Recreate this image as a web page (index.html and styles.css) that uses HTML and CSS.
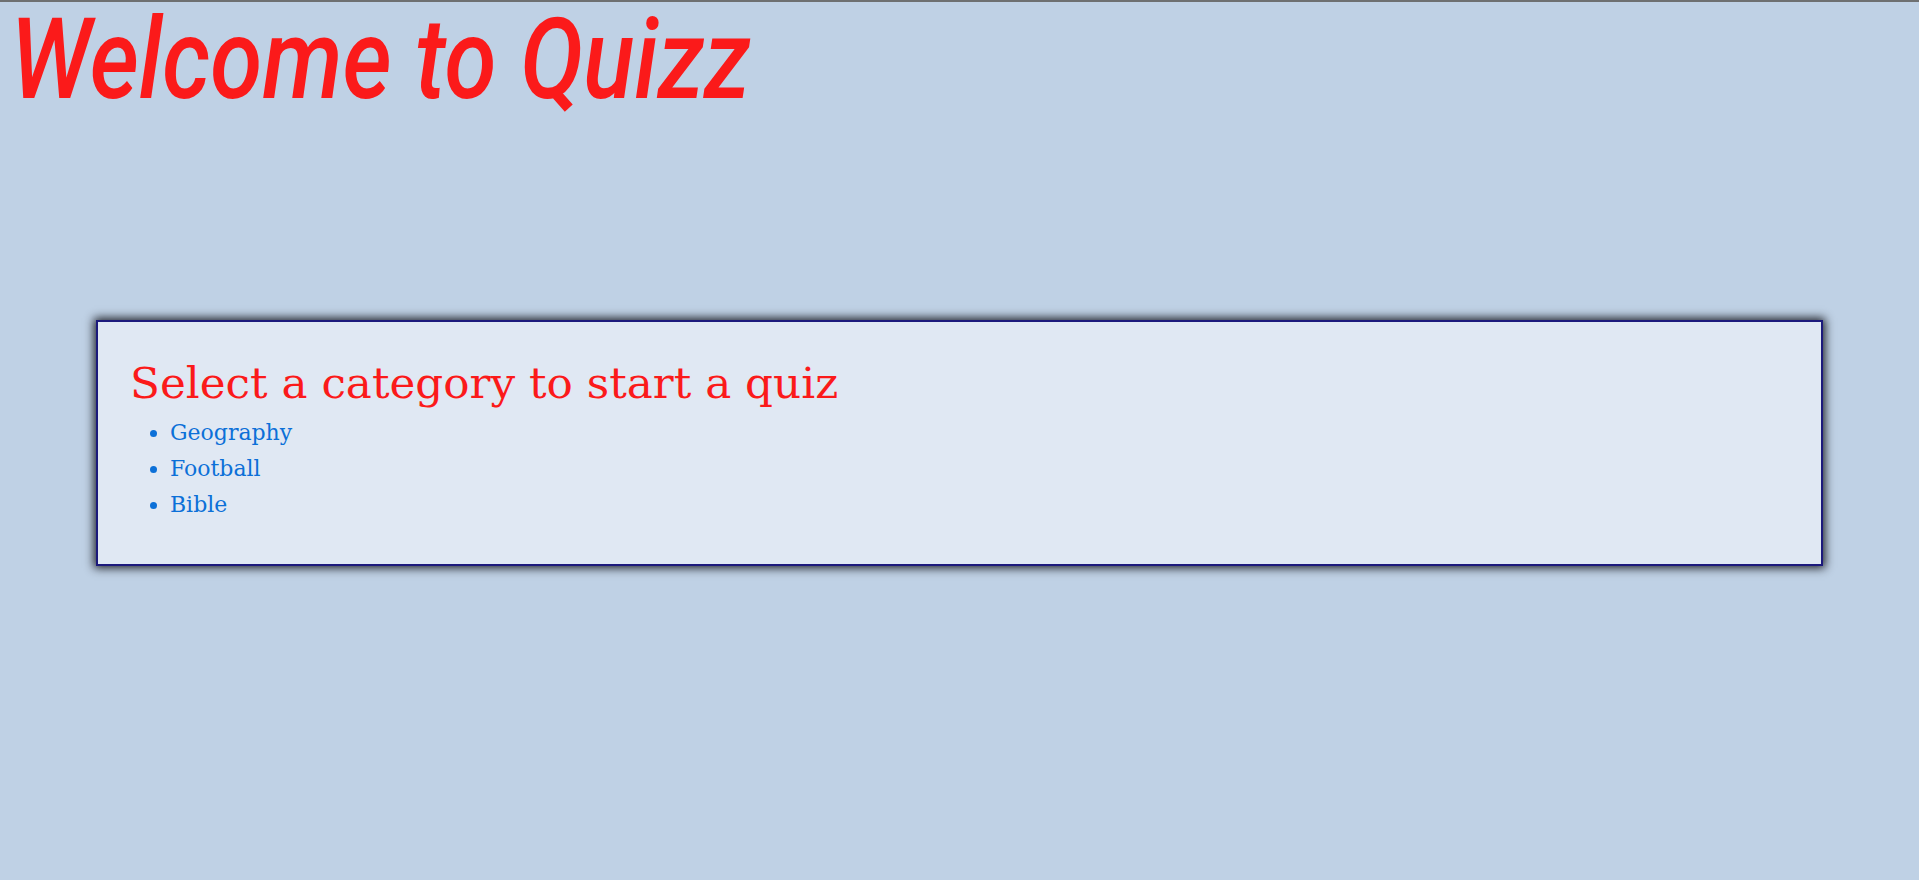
FILE: index.html
```html
<!DOCTYPE html>
<html lang="en">
<head>
<meta charset="utf-8">
<title>Quizz</title>
<link rel="stylesheet" href="styles.css">
</head>
<body>
<div class="topbar"></div>
<header class="masthead">
  <h1 class="title">Welcome to Quizz</h1>
</header>
<main class="card">
  <h2 class="card-title">Select a category to start a quiz</h2>
  <ul class="categories">
    <li><a href="#">Geography</a></li>
    <li><a href="#">Football</a></li>
    <li><a href="#">Bible</a></li>
  </ul>
</main>
</body>
</html>
```

FILE: styles.css
```css
html, body {
  margin: 0;
  padding: 0;
}
body {
  background: #bfd1e5;
  min-height: 880px;
  font-family: "DejaVu Serif", serif;
}
.topbar {
  height: 2px;
  background: #6e7071;
}
.masthead {
  height: 200px;
  padding-top: 2px;
  box-sizing: border-box;
}
.title {
  margin: 0;
  padding-left: 12px;
  font-family: Roboto, sans-serif;
  font-style: italic;
  font-weight: 500;
  font-size: 112px;
  line-height: 1;
  color: #fb1a1a;
  white-space: nowrap;
  transform: scaleX(0.846);
  transform-origin: left top;
}
.card {
  box-sizing: border-box;
  width: 90%;
  margin: 118px auto 0;
  padding: 32px 32px 41px;
  background: #e0e8f3;
  border: 2px solid #1c1a7c;
  box-shadow: 0 0 9px 2px rgba(12, 12, 18, 0.9);
}
.card-title {
  margin: 3px 0 7px;
  font-family: "DejaVu Serif", serif;
  font-weight: normal;
  font-size: 43.7px;
  line-height: normal;
  color: #fb1a1a;
}
.categories {
  margin: 0;
  padding-left: 40px;
  color: #0c70d8;
  font-size: 22px;
}
.categories li {
  line-height: 36px;
}
.categories a {
  color: #0c70d8;
  text-decoration: none;
}
```
